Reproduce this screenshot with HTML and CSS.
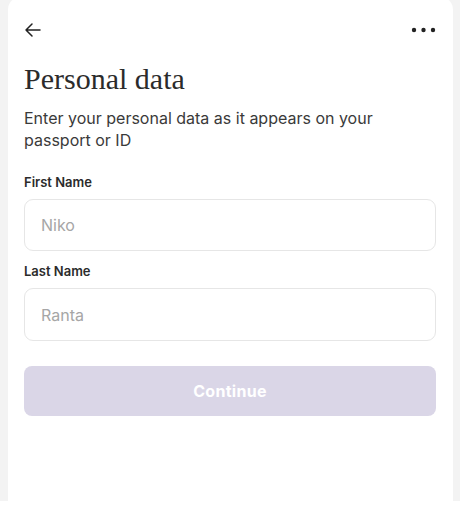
FILE: index.html
```html
<!DOCTYPE html>
<html>
<head>
<meta charset="utf-8">
<link rel="stylesheet" href="styles.css">
</head>
<body>
<div class="stage">
  <div class="card">
    <div class="topbar">
      <svg class="icon" width="18" height="16" viewBox="0 0 18 16"><path d="M16 8H2M8 2L2 8l6 6" fill="none" stroke="#222" stroke-width="1.5" stroke-linecap="round" stroke-linejoin="round"/></svg>
      <svg class="icon" width="25" height="6" viewBox="0 0 25 6"><circle cx="3" cy="3" r="2.2" fill="#222"/><circle cx="12.5" cy="3" r="2.2" fill="#222"/><circle cx="22" cy="3" r="2.2" fill="#222"/></svg>
    </div>
    <h1 class="title">Personal data</h1>
    <p class="lead">Enter your personal data as it appears on your passport or ID</p>
    <form class="form">
      <label class="field">
        <span class="label">First Name</span>
        <span class="input">Niko</span>
      </label>
      <label class="field">
        <span class="label">Last Name</span>
        <span class="input input-last">Ranta</span>
      </label>
      <div class="button">Continue</div>
    </form>
  </div>
</div>
</body>
</html>
```
FILE: styles.css
```css
html, body {
  margin: 0;
  padding: 0;
  background: #ffffff;
}
.stage {
  height: 501px;
  background: #f3f3f3;
  padding: 0 7px 0 8px;
  overflow: hidden;
}
.card {
  height: 520px;
  margin-top: -4px;
  background: #ffffff;
  border-radius: 14px;
  padding: 24px 17px 0 16px;
  box-sizing: border-box;
  font-family: "Inter", "Roboto", sans-serif;
  color: #2b2b2b;
}
.topbar {
  display: flex;
  justify-content: space-between;
  align-items: center;
  height: 20px;
}
.icon { display: block; }
.title {
  margin: 21px 0 0;
  font-family: "Liberation Serif", serif;
  font-weight: normal;
  font-size: 30px;
  line-height: 36px;
  color: #2b2b2b;
}
.lead {
  margin: 10px 0 0;
  font-size: 16px;
  line-height: 22px;
  color: #3a3a3a;
}
.form {
  display: flex;
  flex-direction: column;
  margin-top: 22px;
}
.field {
  display: flex;
  flex-direction: column;
  gap: 8px;
  margin-bottom: 11px;
}
.label {
  font-size: 13px;
  font-weight: 600;
  line-height: 18px;
  color: #2b2b2b;
}
.input {
  height: 52px;
  border: 1px solid #e6e6e6;
  border-radius: 9px;
  box-sizing: border-box;
  padding: 0 16px;
  display: flex;
  align-items: center;
  font-size: 16px;
  color: #a6a6a6;
}
.input-last {
  height: 53px;
}
.button {
  margin-top: 14px;
  height: 50px;
  border-radius: 8px;
  background: #dad6e7;
  color: #ffffff;
  font-weight: 700;
  font-size: 16px;
  display: flex;
  align-items: center;
  justify-content: center;
  letter-spacing: 0.3px;
}
```
